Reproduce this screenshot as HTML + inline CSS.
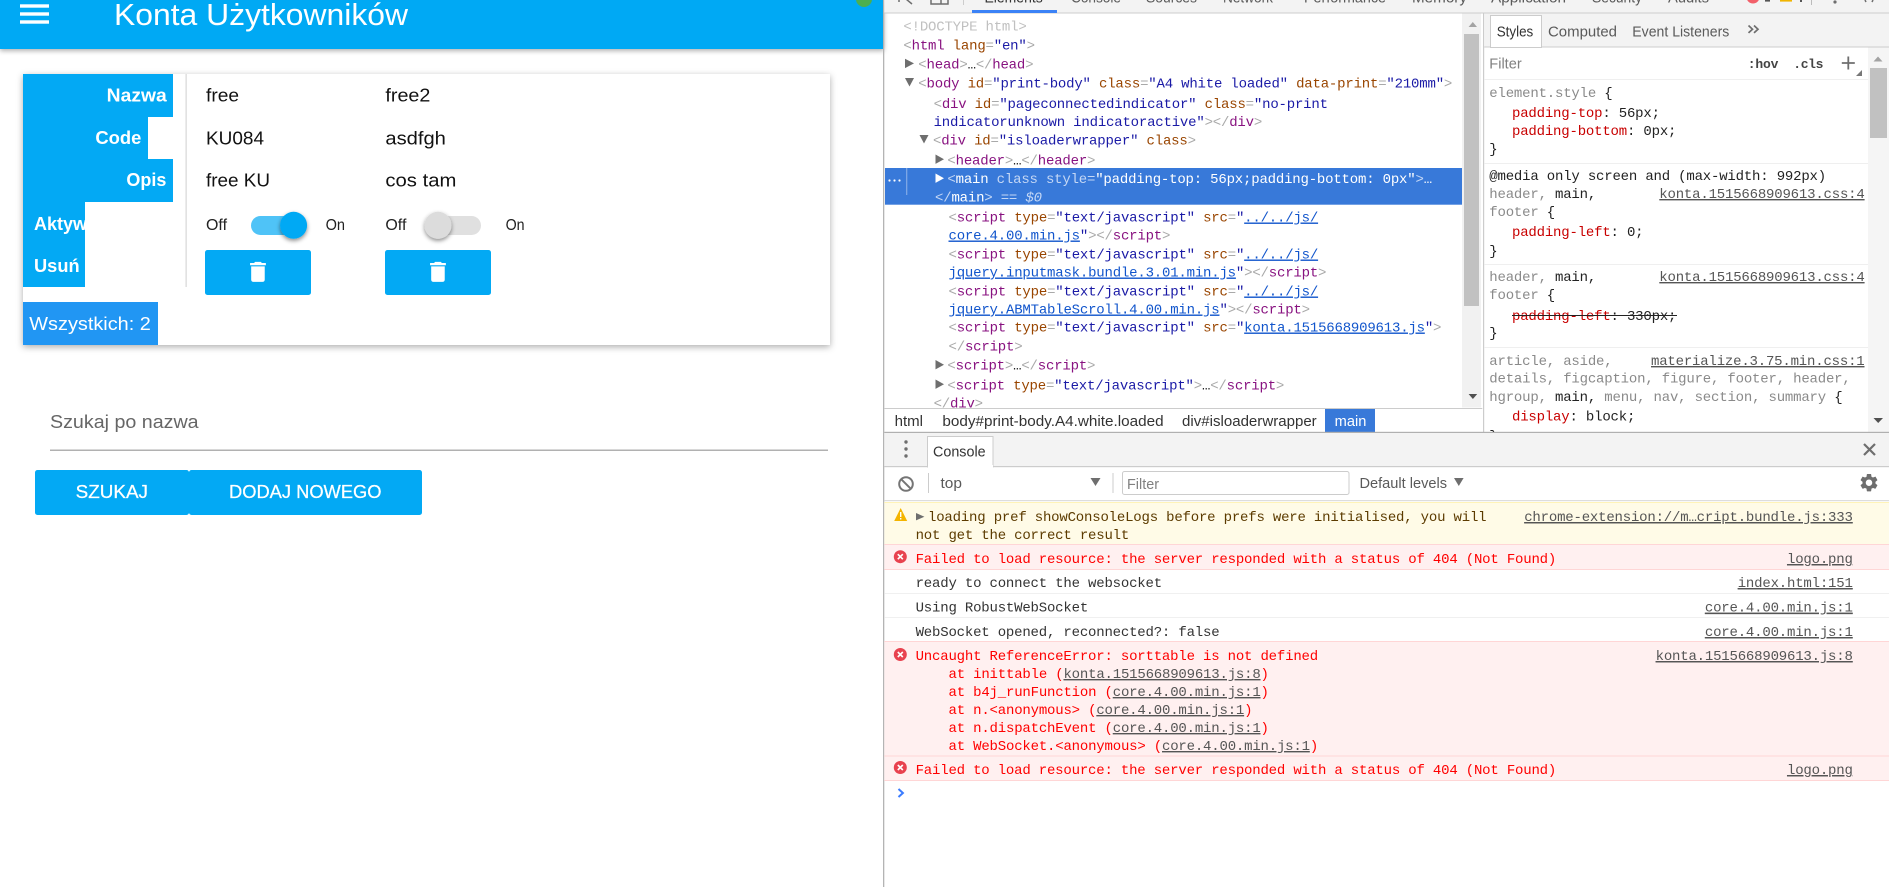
<!DOCTYPE html>
<html lang="en">
<head>
<meta charset="utf-8">
<title>Konta Użytkowników</title>
<style>
html,body{margin:0;padding:0;background:#fff;overflow:hidden}
svg{display:block}
text{white-space:pre}
.s{font-family:"Liberation Sans",sans-serif}
.m{font-family:"Liberation Mono",monospace;font-size:14px;letter-spacing:-.19px}
.t{fill:#881280}.b{fill:#a9a9a9}.a{fill:#994500}.v{fill:#1a1aa6}.l{fill:#1155cc;text-decoration:underline}
.g{fill:#8a8a8a}.k{fill:#222}.r{fill:#c80000}
.u{fill:#555;text-decoration:underline}
.e{fill:#f00}
.ul{text-decoration:underline}
</style>
</head>
<body>
<svg xmlns="http://www.w3.org/2000/svg" width="1889" height="887" viewBox="0 0 1889 887">
<defs>
<filter id="sh" x="-5%" y="-10%" width="110%" height="125%"><feDropShadow dx="0" dy="2" stdDeviation="3.5" flood-color="#000" flood-opacity=".32"/></filter>
<filter id="hs" x="-5%" y="-20%" width="110%" height="160%"><feDropShadow dx="0" dy="2" stdDeviation="2.5" flood-color="#000" flood-opacity=".3"/></filter>
<filter id="th" x="-40%" y="-40%" width="180%" height="190%"><feDropShadow dx="0" dy="2" stdDeviation="2" flood-color="#000" flood-opacity=".45"/></filter>
<clipPath id="akt"><rect x="23" y="202" width="62" height="43"/></clipPath>
<clipPath id="sc"><rect x="1484" y="47" width="384" height="385"/></clipPath>
<clipPath id="el"><rect x="885" y="13" width="577" height="395"/></clipPath>
<path id="trash" d="M6 19c0 1.1.9 2 2 2h8c1.1 0 2-.9 2-2V7H6v12zM19 4h-3.5l-1-1h-5l-1 1H5v2h14V4z"/>
</defs>

<!-- left app -->
<rect x="0" y="0" width="884" height="49" fill="#03a9f4" filter="url(#hs)"/>
<rect x="20" y="4.3" width="29" height="3.4" fill="#fff"/>
<rect x="20" y="12.3" width="29" height="3.4" fill="#fff"/>
<rect x="20" y="20.3" width="29" height="3.4" fill="#fff"/>
<text class="s" x="114" y="25" font-size="31" fill="#fff" textLength="294" lengthAdjust="spacingAndGlyphs">Konta Użytkowników</text>
<circle cx="864" cy="-1" r="8" fill="#4caf50"/>

<rect x="23" y="74" width="807" height="271" fill="#fff" filter="url(#sh)"/>
<rect x="23" y="74" width="150" height="43" fill="#03a9f4"/>
<rect x="23" y="117" width="125" height="42" fill="#03a9f4"/>
<rect x="23" y="159" width="150" height="43" fill="#03a9f4"/>
<rect x="23" y="202" width="62" height="85" fill="#03a9f4"/>
<rect x="185.6" y="74" width="1" height="213" fill="#cfcfcf"/>
<g class="s" font-size="18.5" font-weight="700" fill="#fff">
<text x="106.7" y="101.5" textLength="60" lengthAdjust="spacingAndGlyphs">Nazwa</text>
<text x="95.4" y="144" textLength="46" lengthAdjust="spacingAndGlyphs">Code</text>
<text x="126.4" y="186" textLength="40" lengthAdjust="spacingAndGlyphs">Opis</text>
<text x="34" y="230" font-size="18" clip-path="url(#akt)">Aktywny</text>
<text x="34" y="272" textLength="45.6" lengthAdjust="spacingAndGlyphs">Usuń</text>
</g>
<g class="s" font-size="18" fill="#111">
<text x="206" y="101.5" textLength="33" lengthAdjust="spacingAndGlyphs">free</text>
<text x="385.4" y="101.5" textLength="45" lengthAdjust="spacingAndGlyphs">free2</text>
<text x="206" y="144.3" textLength="58" lengthAdjust="spacingAndGlyphs">KU084</text>
<text x="385.4" y="144.3" textLength="60.5" lengthAdjust="spacingAndGlyphs">asdfgh</text>
<text x="206" y="186.7" textLength="64" lengthAdjust="spacingAndGlyphs">free KU</text>
<text x="385.4" y="186.7" textLength="71" lengthAdjust="spacingAndGlyphs">cos tam</text>
</g>
<g class="s" font-size="15.5" fill="#222">
<text x="206" y="230" textLength="21" lengthAdjust="spacingAndGlyphs">Off</text>
<text x="325.6" y="230" textLength="19.4" lengthAdjust="spacingAndGlyphs">On</text>
<text x="385.4" y="230" textLength="21" lengthAdjust="spacingAndGlyphs">Off</text>
<text x="505.6" y="230" textLength="19" lengthAdjust="spacingAndGlyphs">On</text>
</g>
<rect x="251" y="216" width="54" height="19" rx="9.5" fill="#4fc3f7"/>
<circle cx="293.6" cy="225.3" r="13.5" fill="#03a9f4" filter="url(#th)"/>
<rect x="427" y="216" width="54" height="19" rx="9.5" fill="#e0e0e0"/>
<circle cx="438" cy="225.3" r="13.5" fill="#dcdcdc" filter="url(#th)"/>
<rect x="205" y="250" width="106" height="45" rx="2.5" fill="#03a9f4"/>
<rect x="385" y="250" width="106" height="45" rx="2.5" fill="#03a9f4"/>
<use href="#trash" fill="#fff" transform="translate(244.4 258.6) scale(1.13 1.11)"/>
<use href="#trash" fill="#fff" transform="translate(424.4 258.6) scale(1.13 1.11)"/>
<rect x="23" y="302" width="135" height="43" fill="#2196f3"/>
<text class="s" x="29.3" y="330" font-size="18" fill="#fff" textLength="121.5" lengthAdjust="spacingAndGlyphs">Wszystkich: 2</text>

<text class="s" x="50" y="428" font-size="18" fill="#666" textLength="148.6" lengthAdjust="spacingAndGlyphs">Szukaj po nazwa</text>
<rect x="50" y="449.6" width="778" height="1.2" fill="#9e9e9e"/>
<rect x="35" y="470" width="154" height="45" rx="2.5" fill="#03a9f4"/>
<rect x="189" y="470" width="233" height="45" rx="2.5" fill="#03a9f4"/>
<rect x="187" y="472" width="4" height="41" fill="#03a9f4"/>
<g class="s" font-size="18" fill="#fff" stroke="#fff" stroke-width=".25">
<text x="75.6" y="498" textLength="72.4" lengthAdjust="spacingAndGlyphs">SZUKAJ</text>
<text x="229" y="498" textLength="152.5" lengthAdjust="spacingAndGlyphs">DODAJ NOWEGO</text>
</g>
<rect x="883" y="0" width="1.3" height="887" fill="#b4b4b4"/>

<!-- devtools top bar -->
<rect x="884.3" y="0" width="1005" height="12.5" fill="#f3f3f3"/>
<rect x="884.3" y="12.5" width="1005" height="1" fill="#cccccc"/>
<rect x="972" y="10" width="85" height="3" fill="#3b82f6"/>
<g fill="none" stroke="#6e6e6e" stroke-width="1.5">
<path d="M899 -2 L899 2 M906 -1 L912 4"/>
<rect x="931" y="-8" width="17" height="12"/>
<path d="M941 -8V4"/>
</g>
<rect x="963" y="0" width="1" height="5" fill="#ccc"/>
<g class="s" font-size="14.5" fill="#5a5a5a">
<text x="984.5" y="2.4" fill="#333" textLength="58.2" lengthAdjust="spacingAndGlyphs">Elements</text>
<text x="1071" y="2.4" textLength="50" lengthAdjust="spacingAndGlyphs">Console</text>
<text x="1146" y="2.4" textLength="51" lengthAdjust="spacingAndGlyphs">Sources</text>
<text x="1223" y="2.4" textLength="50" lengthAdjust="spacingAndGlyphs">Network</text>
<text x="1304" y="2.4" textLength="82" lengthAdjust="spacingAndGlyphs">Performance</text>
<text x="1412" y="2.4" textLength="55" lengthAdjust="spacingAndGlyphs">Memory</text>
<text x="1491" y="2.4" textLength="75" lengthAdjust="spacingAndGlyphs">Application</text>
<text x="1592" y="2.4" textLength="50" lengthAdjust="spacingAndGlyphs">Security</text>
<text x="1668" y="2.4" textLength="41" lengthAdjust="spacingAndGlyphs">Audits</text>
</g>
<circle cx="1753" cy="-3" r="6.5" fill="#f2606a"/>
<rect x="1765" y="0" width="5" height="1.6" fill="#555"/>
<rect x="1780" y="0" width="12" height="1.6" fill="#f0b400"/>
<rect x="1800" y="0" width="2" height="2" fill="#555"/>
<rect x="1811" y="0" width="1" height="5" fill="#bbb"/>
<circle cx="1835" cy="2" r="1.6" fill="#6e6e6e"/>
<path d="M1865 0l1 2 M1873 0l-1 2" stroke="#6e6e6e" stroke-width="1.5"/>

<!-- elements -->
<g clip-path="url(#el)">
<rect x="885" y="168" width="577" height="36.7" fill="#3879d9"/>
<g class="m">
<text x="903.4" y="30.5" fill="#c0c0c0">&lt;!DOCTYPE html&gt;</text>
<text x="903.4" y="49.5"><tspan class="b">&lt;</tspan><tspan class="t">html</tspan><tspan class="a"> lang</tspan><tspan class="b">=</tspan><tspan class="v">"en"</tspan><tspan class="b">&gt;</tspan></text>
<text x="918.3" y="68.5"><tspan class="b">&lt;</tspan><tspan class="t">head</tspan><tspan class="b">&gt;</tspan><tspan class="k">…</tspan><tspan class="b">&lt;/</tspan><tspan class="t">head</tspan><tspan class="b">&gt;</tspan></text>
<text x="918.3" y="87.5"><tspan class="b">&lt;</tspan><tspan class="t">body</tspan><tspan class="a"> id</tspan><tspan class="b">=</tspan><tspan class="v">"print-body"</tspan><tspan class="a"> class</tspan><tspan class="b">=</tspan><tspan class="v">"A4 white loaded"</tspan><tspan class="a"> data-print</tspan><tspan class="b">=</tspan><tspan class="v">"210mm"</tspan><tspan class="b">&gt;</tspan></text>
<text x="933.6" y="108"><tspan class="b">&lt;</tspan><tspan class="t">div</tspan><tspan class="a"> id</tspan><tspan class="b">=</tspan><tspan class="v">"pageconnectedindicator"</tspan><tspan class="a"> class</tspan><tspan class="b">=</tspan><tspan class="v">"no-print</tspan></text>
<text x="933.6" y="126"><tspan class="v">indicatorunknown indicatoractive"</tspan><tspan class="b">&gt;&lt;/</tspan><tspan class="t">div</tspan><tspan class="b">&gt;</tspan></text>
<text x="933" y="144.5"><tspan class="b">&lt;</tspan><tspan class="t">div</tspan><tspan class="a"> id</tspan><tspan class="b">=</tspan><tspan class="v">"isloaderwrapper"</tspan><tspan class="a"> class</tspan><tspan class="b">&gt;</tspan></text>
<text x="947.4" y="164.5"><tspan class="b">&lt;</tspan><tspan class="t">header</tspan><tspan class="b">&gt;</tspan><tspan class="k">…</tspan><tspan class="b">&lt;/</tspan><tspan class="t">header</tspan><tspan class="b">&gt;</tspan></text>
<text x="947.4" y="183.2" fill="#fff"><tspan fill="#c4d7f5">&lt;</tspan>main<tspan fill="#c4d7f5"> class style=</tspan>"padding-top: 56px;padding-bottom: 0px"<tspan fill="#c4d7f5">&gt;</tspan>…</text>
<text x="935" y="201.5" fill="#fff"><tspan fill="#c4d7f5">&lt;/</tspan>main<tspan fill="#c4d7f5">&gt; == </tspan><tspan fill="#c4d7f5" font-style="italic">$0</tspan></text>
<text x="948.5" y="221.5"><tspan class="b">&lt;</tspan><tspan class="t">script</tspan><tspan class="a"> type</tspan><tspan class="b">=</tspan><tspan class="v">"text/javascript"</tspan><tspan class="a"> src</tspan><tspan class="b">=</tspan><tspan class="v">"</tspan><tspan class="l">../../js/</tspan></text>
<text x="948.5" y="239.5"><tspan class="l">core.4.00.min.js</tspan><tspan class="v">"</tspan><tspan class="b">&gt;&lt;/</tspan><tspan class="t">script</tspan><tspan class="b">&gt;</tspan></text>
<text x="948.5" y="258.5"><tspan class="b">&lt;</tspan><tspan class="t">script</tspan><tspan class="a"> type</tspan><tspan class="b">=</tspan><tspan class="v">"text/javascript"</tspan><tspan class="a"> src</tspan><tspan class="b">=</tspan><tspan class="v">"</tspan><tspan class="l">../../js/</tspan></text>
<text x="948.5" y="276.5"><tspan class="l">jquery.inputmask.bundle.3.01.min.js</tspan><tspan class="v">"</tspan><tspan class="b">&gt;&lt;/</tspan><tspan class="t">script</tspan><tspan class="b">&gt;</tspan></text>
<text x="948.5" y="295.5"><tspan class="b">&lt;</tspan><tspan class="t">script</tspan><tspan class="a"> type</tspan><tspan class="b">=</tspan><tspan class="v">"text/javascript"</tspan><tspan class="a"> src</tspan><tspan class="b">=</tspan><tspan class="v">"</tspan><tspan class="l">../../js/</tspan></text>
<text x="948.5" y="313.5"><tspan class="l">jquery.ABMTableScroll.4.00.min.js</tspan><tspan class="v">"</tspan><tspan class="b">&gt;&lt;/</tspan><tspan class="t">script</tspan><tspan class="b">&gt;</tspan></text>
<text x="948.5" y="331.5"><tspan class="b">&lt;</tspan><tspan class="t">script</tspan><tspan class="a"> type</tspan><tspan class="b">=</tspan><tspan class="v">"text/javascript"</tspan><tspan class="a"> src</tspan><tspan class="b">=</tspan><tspan class="v">"</tspan><tspan class="l">konta.1515668909613.js</tspan><tspan class="v">"</tspan><tspan class="b">&gt;</tspan></text>
<text x="948.5" y="350.5"><tspan class="b">&lt;/</tspan><tspan class="t">script</tspan><tspan class="b">&gt;</tspan></text>
<text x="947.4" y="369.5"><tspan class="b">&lt;</tspan><tspan class="t">script</tspan><tspan class="b">&gt;</tspan><tspan class="k">…</tspan><tspan class="b">&lt;/</tspan><tspan class="t">script</tspan><tspan class="b">&gt;</tspan></text>
<text x="947.4" y="389.5"><tspan class="b">&lt;</tspan><tspan class="t">script</tspan><tspan class="a"> type</tspan><tspan class="b">=</tspan><tspan class="v">"text/javascript"</tspan><tspan class="b">&gt;</tspan><tspan class="k">…</tspan><tspan class="b">&lt;/</tspan><tspan class="t">script</tspan><tspan class="b">&gt;</tspan></text>
<text x="933.6" y="407.5"><tspan class="b">&lt;/</tspan><tspan class="t">div</tspan><tspan class="b">&gt;</tspan></text>
</g>
<g fill="#6e6e6e">
<path d="M905 58.7l9 4.7-9 4.7z"/>
<path d="M905 78h9l-4.5 8.5z"/>
<path d="M919.5 135h9l-4.5 8.5z"/>
<path d="M935.5 154.5l8.5 4.7-8.5 4.7z"/>
<path d="M935.5 173.5l8.5 4.7-8.5 4.7z" fill="#fff"/>
<path d="M935.5 360l8.5 4.7-8.5 4.7z"/>
<path d="M935.5 379.5l8.5 4.7-8.5 4.7z"/>
</g>
<g fill="#fff"><circle cx="889.5" cy="180.5" r="1.1"/><circle cx="894.5" cy="180.5" r="1.1"/><circle cx="899.5" cy="180.5" r="1.1"/></g>
<rect x="906.4" y="168" width=".8" height="27" fill="#a9c4ee"/>
</g>
<rect x="1462" y="13.5" width="19" height="394" fill="#f1f1f1"/>
<rect x="1464" y="34" width="15" height="272" fill="#c1c1c1"/>
<path d="M1468.6 27l4.2-5 4.2 5z" fill="#a3a3a3"/>
<path d="M1468.6 394h8.6l-4.3 5z" fill="#505050"/>

<!-- breadcrumb -->
<rect x="884.3" y="408" width="598" height="1" fill="#ccc"/>
<rect x="1325" y="409" width="50" height="23" fill="#3879d9"/>
<g class="s" font-size="14.5" fill="#333">
<text x="894.6" y="426" textLength="28.4" lengthAdjust="spacingAndGlyphs">html</text>
<text x="942.4" y="426" textLength="221.2" lengthAdjust="spacingAndGlyphs">body#print-body.A4.white.loaded</text>
<text x="1182" y="426" textLength="134.7" lengthAdjust="spacingAndGlyphs">div#isloaderwrapper</text>
<text x="1334.7" y="426" fill="#fff" textLength="31.7" lengthAdjust="spacingAndGlyphs">main</text>
</g>

<!-- sidebar -->
<rect x="1483" y="13" width="1.2" height="419" fill="#ccc"/>
<rect x="1484.2" y="13.5" width="405" height="33.5" fill="#f3f3f3"/>
<rect x="1484.2" y="46.5" width="405" height="1" fill="#ccc"/>
<rect x="1490.5" y="15.5" width="51" height="32" fill="#fff" stroke="#ccc"/>
<g class="s" font-size="14.5" fill="#5a5a5a">
<text x="1496.7" y="36.7" fill="#333" textLength="36.6" lengthAdjust="spacingAndGlyphs">Styles</text>
<text x="1548" y="36.7" textLength="69" lengthAdjust="spacingAndGlyphs">Computed</text>
<text x="1632.3" y="36.7" textLength="97" lengthAdjust="spacingAndGlyphs">Event Listeners</text>
</g>
<path d="M1748.5 25.5l4 3.7-4 3.7M1754 25.5l4 3.7-4 3.7" fill="none" stroke="#6e6e6e" stroke-width="1.7"/>
<text class="s" x="1489.3" y="68.3" font-size="14.5" fill="#808080" textLength="32.4" lengthAdjust="spacingAndGlyphs">Filter</text>
<text class="m" x="1747.7" y="68" font-weight="700" fill="#444" style="font-size:13px;letter-spacing:-.1px" textLength="30.6">:hov</text>
<text class="m" x="1793.3" y="68" font-weight="700" fill="#444" style="font-size:13px;letter-spacing:-.1px" textLength="30">.cls</text>
<path d="M1848.3 56.5v13M1841.8 63h13" stroke="#6e6e6e" stroke-width="1.8"/>
<path d="M1862 70v6h-6z" fill="#777"/>
<rect x="1484.2" y="79" width="384" height="1" fill="#efefef"/>
<rect x="1484.2" y="163" width="384" height="1" fill="#efefef"/>
<rect x="1484.2" y="264" width="384" height="1" fill="#efefef"/>
<rect x="1484.2" y="347" width="384" height="1" fill="#efefef"/>
<g class="m" clip-path="url(#sc)" fill="#222">
<text x="1489.3" y="97"><tspan class="g">element.style</tspan> {</text>
<text x="1512" y="117"><tspan class="r">padding-top</tspan>: 56px;</text>
<text x="1512" y="135"><tspan class="r">padding-bottom</tspan>: 0px;</text>
<text x="1489.3" y="153">}</text>
<text x="1489.3" y="180">@media only screen and (max-width: 992px)</text>
<text x="1489.3" y="198"><tspan class="g">header, </tspan>main,</text>
<text x="1659.3" y="198" class="u">konta.1515668909613.css:4</text>
<text x="1489.3" y="216"><tspan class="g">footer</tspan> {</text>
<text x="1512" y="236"><tspan class="r">padding-left</tspan>: 0;</text>
<text x="1489.3" y="255">}</text>
<text x="1489.3" y="281"><tspan class="g">header, </tspan>main,</text>
<text x="1659.3" y="281" class="u">konta.1515668909613.css:4</text>
<text x="1489.3" y="299"><tspan class="g">footer</tspan> {</text>
<text x="1512" y="320"><tspan class="r">padding-left</tspan>: 330px;</text>
<rect x="1512" y="315" width="165" height="1" fill="#222"/>
<text x="1489.3" y="337">}</text>
<text x="1489.3" y="365" class="g">article, aside,</text>
<text x="1651" y="365" class="u">materialize.3.75.min.css:1</text>
<text x="1489.3" y="382.5" class="g">details, figcaption, figure, footer, header,</text>
<text x="1489.3" y="401"><tspan class="g">hgroup, </tspan>main,<tspan class="g"> menu, nav, section, summary</tspan> {</text>
<text x="1512" y="420.5"><tspan class="r">display</tspan>: block;</text>
<text x="1489.3" y="440">}</text>
</g>
<rect x="1868" y="47.5" width="21" height="384.5" fill="#f5f5f5"/>
<rect x="1870" y="68" width="17" height="70" fill="#c1c1c1"/>
<path d="M1873.5 61.5l4.5-5 4.5 5z" fill="#a3a3a3"/>
<path d="M1873.5 418h9.5l-4.8 5z" fill="#505050"/>

<!-- console toolbar -->
<rect x="884.3" y="431.8" width="1005" height="1.2" fill="#b0b0b0"/>
<rect x="884.3" y="433" width="1005" height="33" fill="#f3f3f3"/>
<rect x="884.3" y="466" width="1005" height="1.2" fill="#ccc"/>
<g fill="#6e6e6e"><circle cx="906" cy="442" r="1.7"/><circle cx="906" cy="449" r="1.7"/><circle cx="906" cy="456" r="1.7"/></g>
<rect x="927.5" y="436.5" width="65.5" height="30.5" fill="#fff" stroke="#ccc"/>
<rect x="928" y="465" width="65" height="3" fill="#fff"/>
<text class="s" x="933" y="456.7" font-size="14.5" fill="#333" textLength="52.6" lengthAdjust="spacingAndGlyphs">Console</text>
<path d="M1864 444l11 11M1875 444l-11 11" stroke="#6e6e6e" stroke-width="2.2"/>

<!-- console filter -->
<circle cx="906" cy="484" r="6.8" fill="none" stroke="#757575" stroke-width="2"/>
<path d="M901.3 479.3l9.4 9.4" stroke="#757575" stroke-width="2"/>
<rect x="928" y="473" width="1" height="20" fill="#ccc"/>
<text class="s" x="940.5" y="488" font-size="14.5" fill="#5a5a5a" textLength="21.5" lengthAdjust="spacingAndGlyphs">top</text>
<path d="M1090.5 478h10l-5 8z" fill="#6e6e6e"/>
<rect x="1112.5" y="473" width="1" height="20" fill="#ccc"/>
<rect x="1122.5" y="471.5" width="226.5" height="23" rx="2" fill="#fff" stroke="#ccc"/>
<text class="s" x="1127" y="489" font-size="14.5" fill="#808080" textLength="32" lengthAdjust="spacingAndGlyphs">Filter</text>
<text class="s" x="1359.5" y="488" font-size="14.5" fill="#5a5a5a" textLength="87.5" lengthAdjust="spacingAndGlyphs">Default levels</text>
<path d="M1454 478h9.6l-4.8 8z" fill="#6e6e6e"/>
<path transform="translate(1858.2 471.9) scale(.9)" fill="#6e6e6e" d="M19.14 12.94c.04-.3.06-.61.06-.94 0-.32-.02-.64-.07-.94l2.03-1.58c.18-.14.23-.41.12-.61l-1.92-3.32c-.12-.22-.37-.29-.59-.22l-2.39.96c-.5-.38-1.03-.7-1.62-.94l-.36-2.54c-.04-.24-.24-.41-.48-.41h-3.84c-.24 0-.43.17-.47.41l-.36 2.54c-.59.24-1.13.57-1.62.94l-2.39-.96c-.22-.08-.47 0-.59.22L2.74 8.87c-.12.21-.08.47.12.61l2.03 1.58c-.05.3-.09.63-.09.94s.02.64.07.94l-2.03 1.58c-.18.14-.23.41-.12.61l1.92 3.32c.12.22.37.29.59.22l2.39-.96c.5.38 1.03.7 1.62.94l.36 2.54c.05.24.24.41.48.41h3.84c.24 0 .44-.17.47-.41l.36-2.54c.59-.24 1.13-.56 1.62-.94l2.39.96c.22.08.47 0 .59-.22l1.92-3.32c.12-.22.07-.47-.12-.61l-2.01-1.58zM12 15.6c-1.98 0-3.6-1.62-3.6-3.6s1.62-3.6 3.6-3.6 3.6 1.62 3.6 3.6-1.62 3.6-3.6 3.6z"/>
<rect x="884.3" y="500" width="1005" height="1.2" fill="#ddd"/>

<!-- console messages -->
<rect x="884.3" y="502" width="1005" height="42" fill="#fffbe7"/>
<rect x="884.3" y="502" width="1005" height="1" fill="#fff3b8"/>
<rect x="884.3" y="544" width="1005" height="25" fill="#fff0f0"/>
<rect x="884.3" y="544" width="1005" height="1" fill="#ffd6d6"/>
<rect x="884.3" y="569" width="1005" height="1" fill="#ffd6d6"/>
<rect x="884.3" y="593" width="1005" height="1" fill="#f0f0f0"/>
<rect x="884.3" y="617" width="1005" height="1" fill="#f0f0f0"/>
<rect x="884.3" y="641" width="1005" height="114.5" fill="#fff0f0"/>
<rect x="884.3" y="641" width="1005" height="1" fill="#ffd6d6"/>
<rect x="884.3" y="755.5" width="1005" height="25" fill="#fff0f0"/>
<rect x="884.3" y="755.5" width="1005" height="1" fill="#ffd6d6"/>
<rect x="884.3" y="780" width="1005" height="1" fill="#ffd6d6"/>

<path d="M900.7 508l6.5 13h-13z" fill="#f4b400"/>
<rect x="900" y="512" width="1.4" height="5" fill="#fff"/><rect x="900" y="518" width="1.4" height="1.5" fill="#fff"/>
<path d="M916 513l8.4 3.7-8.4 3.7z" fill="#6e6e6e"/>
<g id="ic" fill="#e8424f">
<circle cx="900.3" cy="556.7" r="6.5"/><circle cx="900.3" cy="654.5" r="6.5"/><circle cx="900.3" cy="767.5" r="6.5"/>
</g>
<g stroke="#fff" stroke-width="1.6">
<path d="M897.8 554.2l5 5M902.8 554.2l-5 5"/>
<path d="M897.8 652l5 5M902.8 652l-5 5"/>
<path d="M897.8 765l5 5M902.8 765l-5 5"/>
</g>
<g class="m">
<text x="928" y="521" fill="#5c3b00">loading pref showConsoleLogs before prefs were initialised, you will</text>
<text x="915.6" y="539" fill="#5c3b00">not get the correct result</text>
<text x="915.6" y="563" class="e">Failed to load resource: the server responded with a status of 404 (Not Found)</text>
<text x="915.6" y="587" fill="#333">ready to connect the websocket</text>
<text x="915.6" y="611.7" fill="#333">Using RobustWebSocket</text>
<text x="915.6" y="636" fill="#333">WebSocket opened, reconnected?: false</text>
<text x="915.6" y="660" class="e">Uncaught ReferenceError: sorttable is not defined</text>
<text x="948.5" y="678" class="e">at inittable (<tspan class="u">konta.1515668909613.js:8</tspan>)</text>
<text x="948.5" y="696" class="e">at b4j_runFunction (<tspan class="u">core.4.00.min.js:1</tspan>)</text>
<text x="948.5" y="714" class="e">at n.&lt;anonymous&gt; (<tspan class="u">core.4.00.min.js:1</tspan>)</text>
<text x="948.5" y="732" class="e">at n.dispatchEvent (<tspan class="u">core.4.00.min.js:1</tspan>)</text>
<text x="948.5" y="750" class="e">at WebSocket.&lt;anonymous&gt; (<tspan class="u">core.4.00.min.js:1</tspan>)</text>
<text x="915.6" y="774" class="e">Failed to load resource: the server responded with a status of 404 (Not Found)</text>
</g>
<g class="m u" text-anchor="end">
<text x="1852.7" y="521" class="u">chrome-extension://m…cript.bundle.js:333</text>
<text x="1852.7" y="563" class="u">logo.png</text>
<text x="1852.7" y="587" class="u">index.html:151</text>
<text x="1852.7" y="611.7" class="u">core.4.00.min.js:1</text>
<text x="1852.7" y="636" class="u">core.4.00.min.js:1</text>
<text x="1852.7" y="660" class="u">konta.1515668909613.js:8</text>
<text x="1852.7" y="774" class="u">logo.png</text>
</g>
<path d="M898.5 789l4.4 4-4.4 4" fill="none" stroke="#3b7cff" stroke-width="2"/>
</svg>
</body>
</html>
